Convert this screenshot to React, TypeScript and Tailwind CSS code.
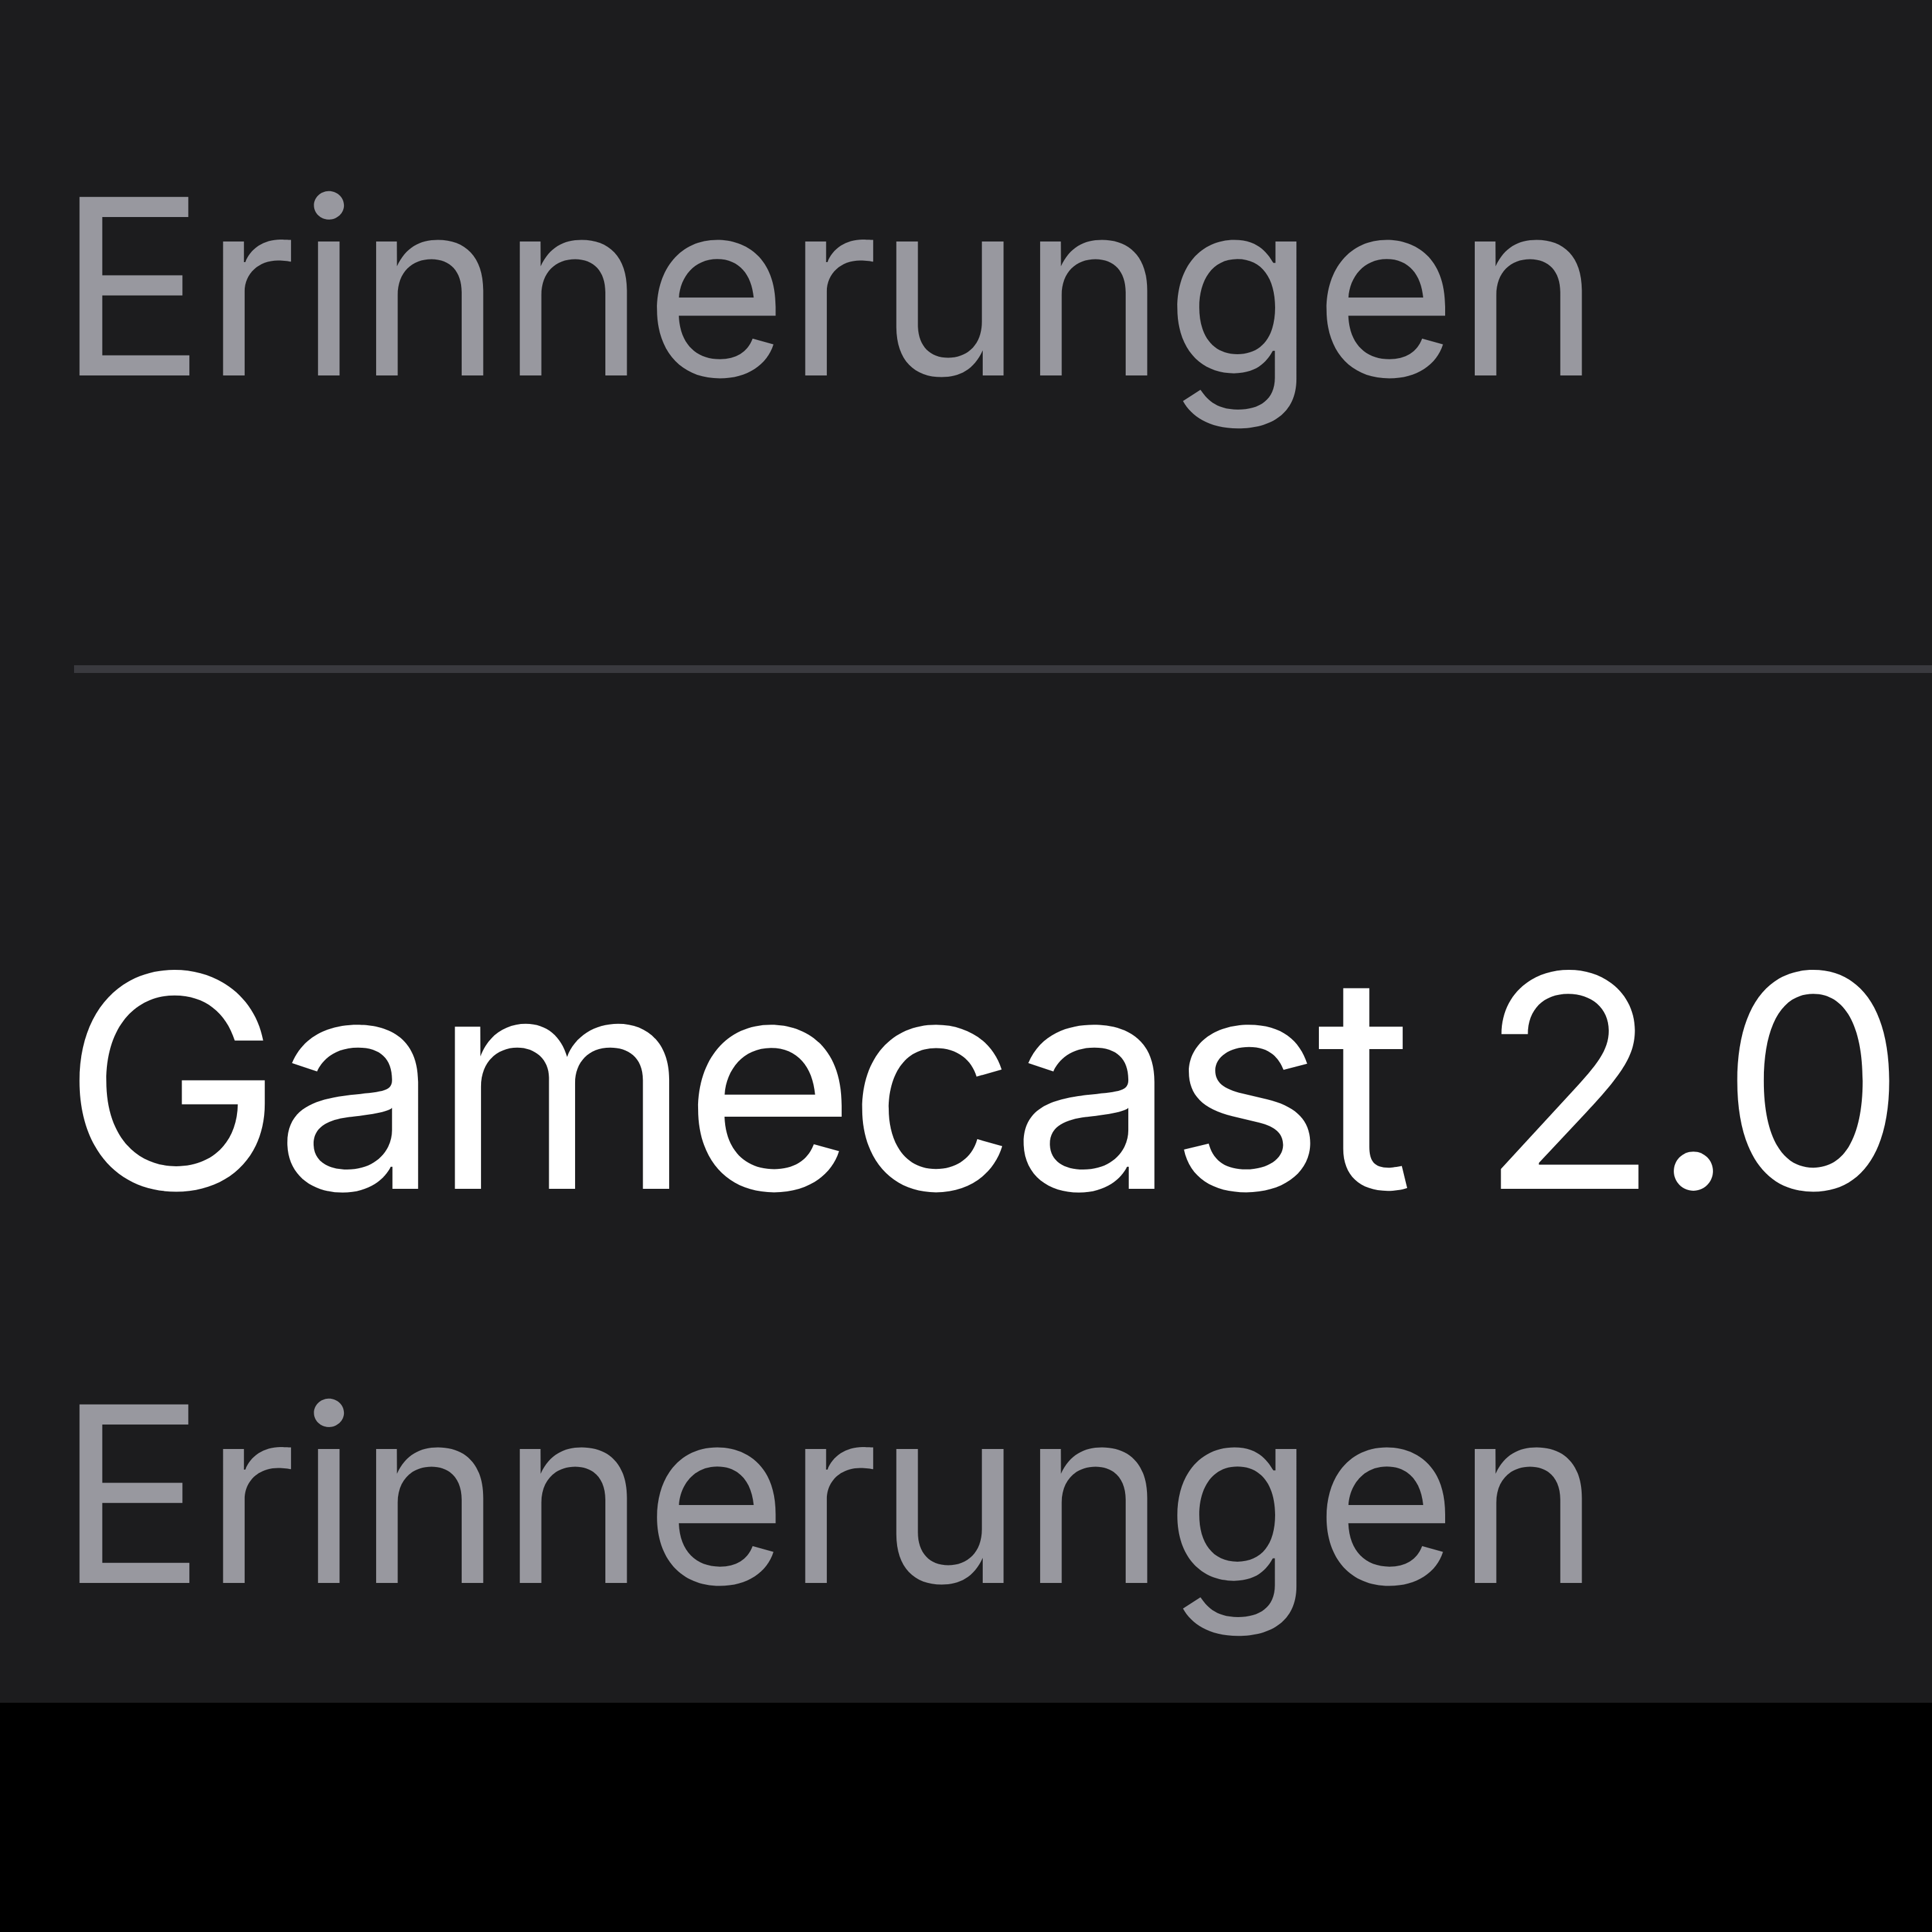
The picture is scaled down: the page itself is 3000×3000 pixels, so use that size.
export default function App() {
  return (
    <div className="w-[3000px] h-[3000px] bg-black" style={{ fontFamily: 'Inter, "Noto Sans", sans-serif' }}>
      <div className="bg-[#1c1c1e] h-[2644px] pt-[254px] flex flex-col">
        {/* previous row subtitle */}
        <p className="pl-[90px] text-[381px] leading-none tracking-[-2px] text-[#98989f] whitespace-nowrap">Erinnerungen</p>

        {/* separator */}
        <div className="ml-[115px] mt-[398px] h-[12px] bg-[#3a3a3f]" />

        {/* row */}
        <div className="mt-[403px] flex flex-col">
          <p className="pl-[96px] text-[461px] leading-none tracking-[-14px] text-white whitespace-nowrap">Gamecast 2.0</p>
          <p className="pl-[90px] mt-[220px] text-[381px] leading-none tracking-[-2px] text-[#98989f] whitespace-nowrap">Erinnerungen</p>
        </div>
      </div>
    </div>
  );
}
